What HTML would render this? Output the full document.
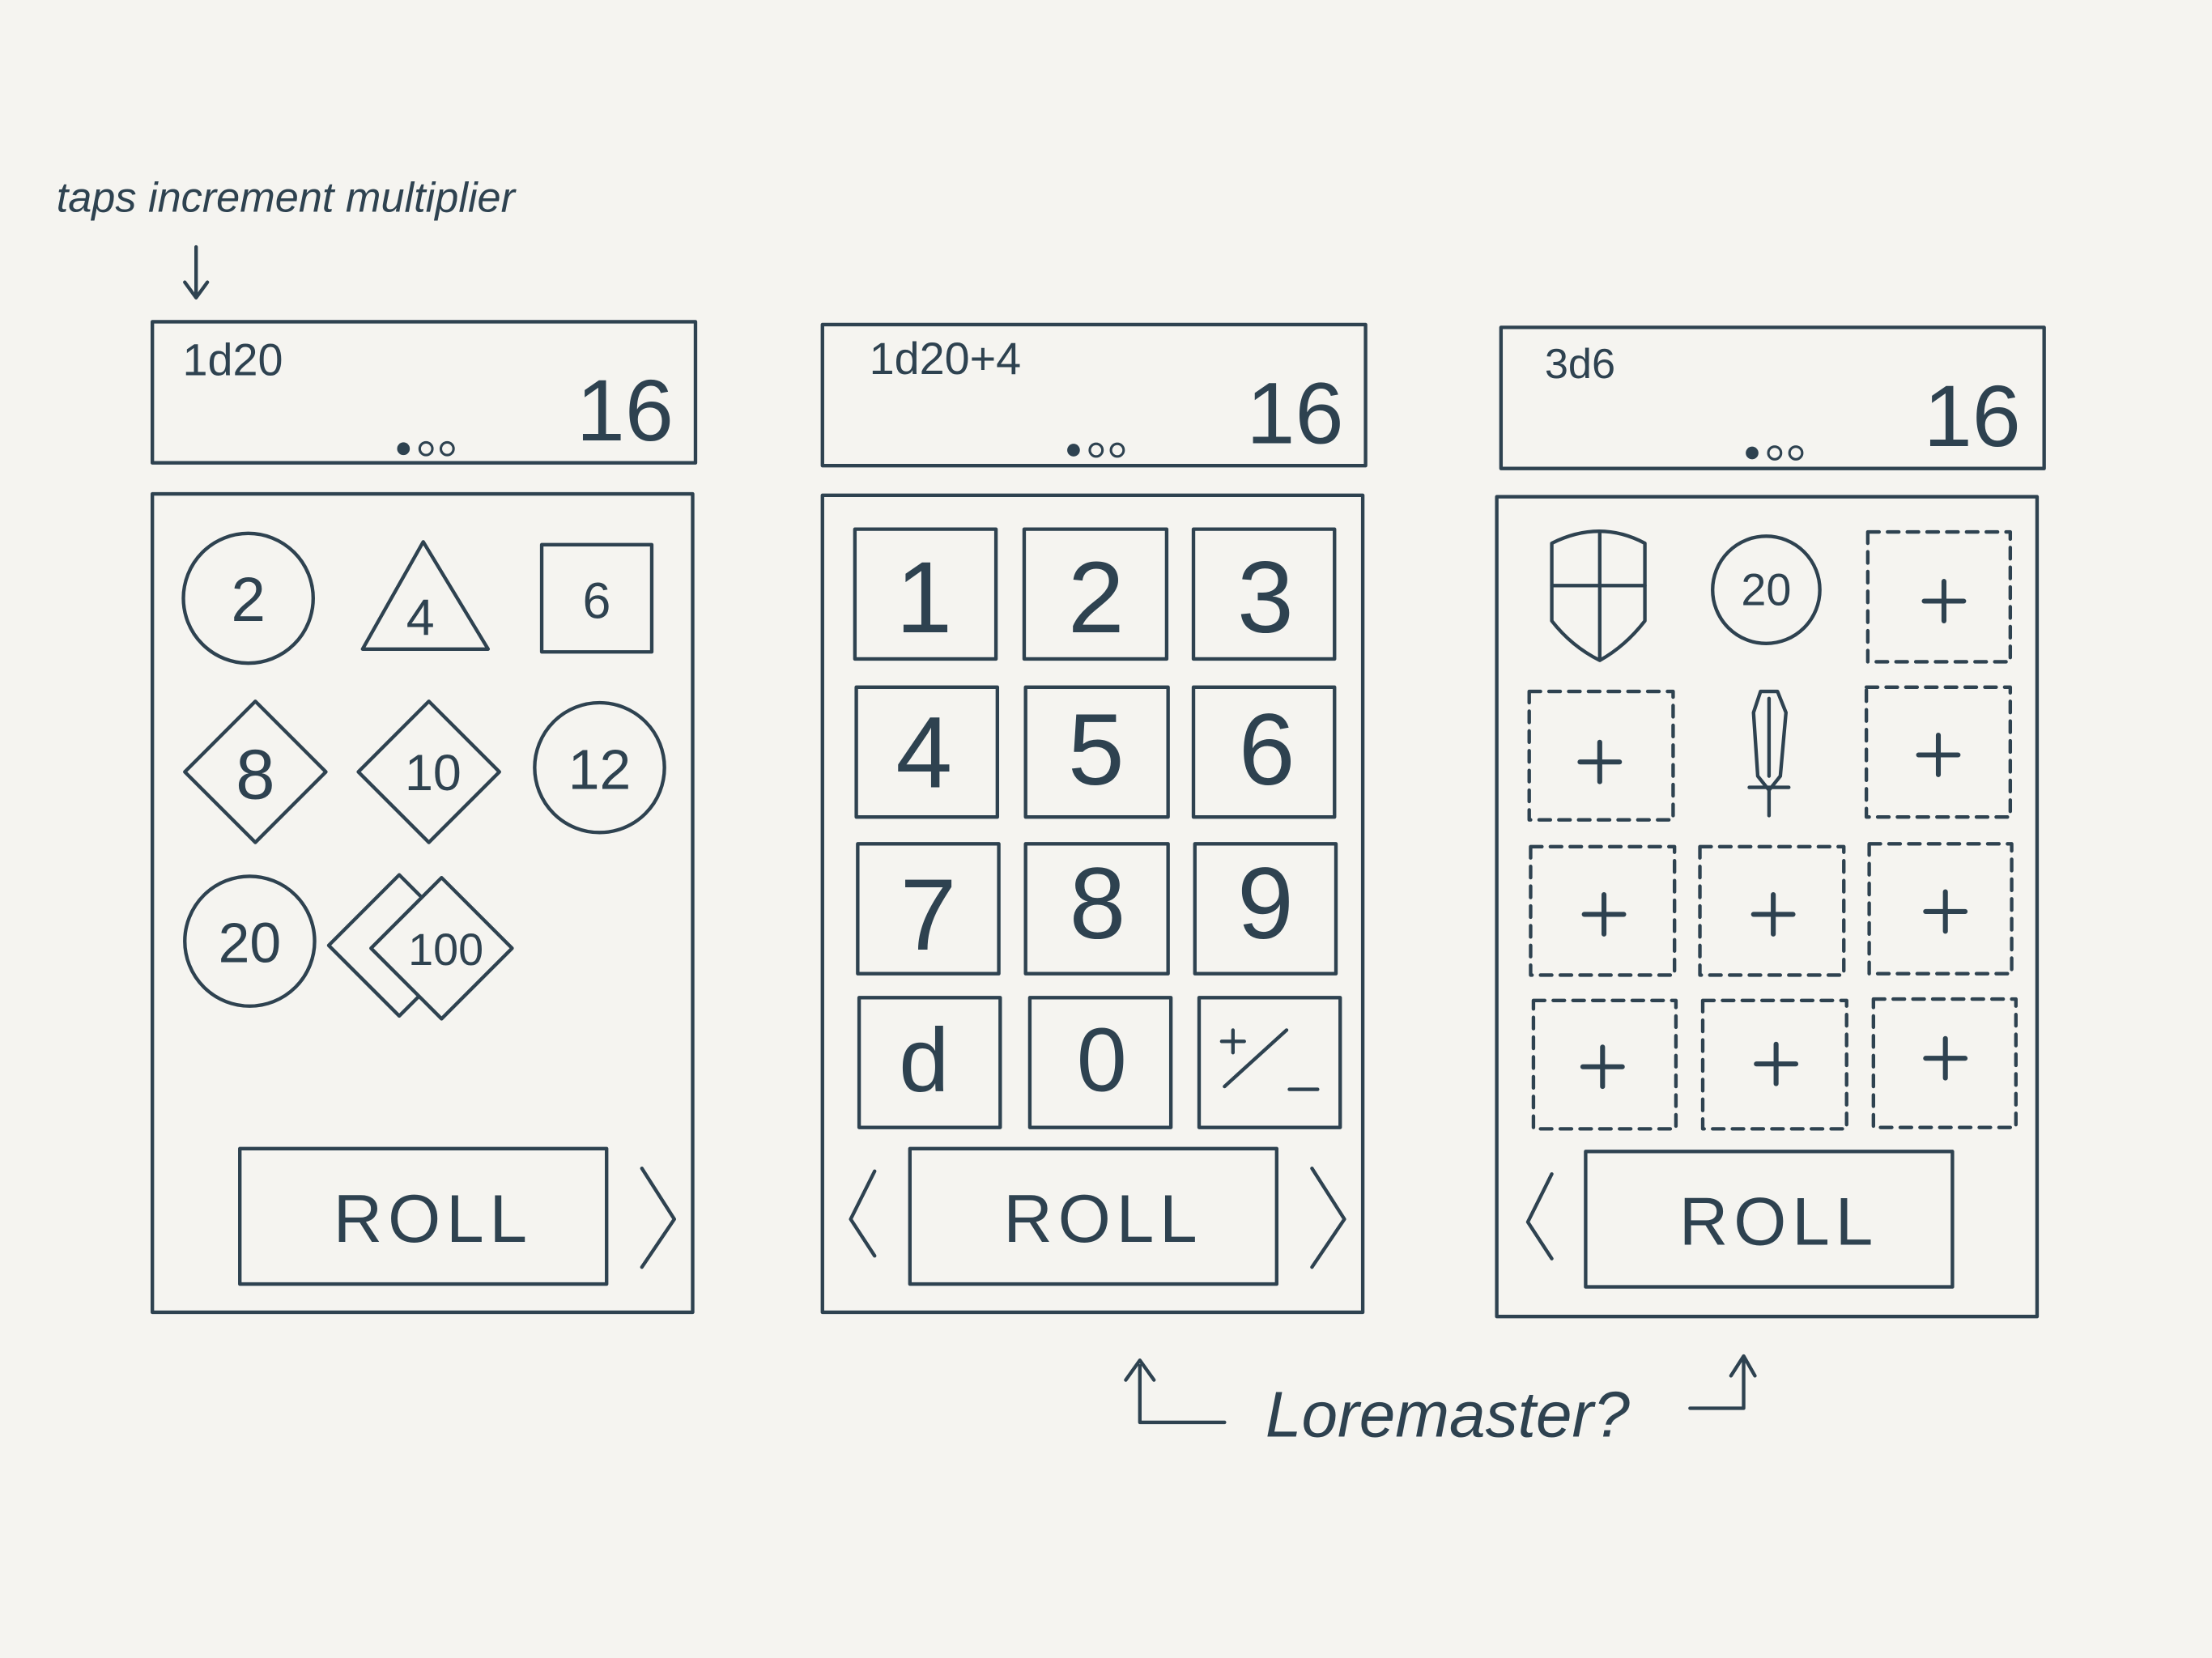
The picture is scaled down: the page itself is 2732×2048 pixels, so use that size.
<!DOCTYPE html>
<html><head><meta charset="utf-8"><style>
html,body{margin:0;padding:0;background:#f5f4f0;}
svg{display:block}
text{font-family:"Liberation Sans",sans-serif;fill:#2e4250;}
</style></head><body>
<svg width="2732" height="2048" viewBox="0 0 1568 1175" preserveAspectRatio="none" xmlns="http://www.w3.org/2000/svg">
<rect width="1568" height="1175" fill="#f5f4f0"/>
<g fill="none" stroke="#2e4250" stroke-width="2.5" stroke-linejoin="round" stroke-linecap="round">
<!-- panel 1 -->
<rect x="108" y="228" width="385" height="100"/>
<rect x="108" y="350" width="383" height="580"/>
<circle cx="176" cy="424" r="46"/>
<path d="M257,460 L300,384 L346,460 Z"/>
<rect x="384" y="386" width="78" height="76"/>
<path d="M181,497 L231,547 L181,597 L131,547 Z"/>
<path d="M304,497 L354,547 L304,597 L254,547 Z"/>
<circle cx="425" cy="544" r="46"/>
<circle cx="177" cy="667" r="46"/>
<path d="M283,620 L333,670 L283,720 L233,670 Z"/>
<path d="M313,622 L363,672 L313,722 L263,672 Z" fill="#f5f4f0"/>
<rect x="170" y="814" width="260" height="96"/>
<path d="M455,828 L478,864 L455,898"/>
<!-- panel 2 -->
<rect x="583" y="230" width="385" height="100"/>
<rect x="583" y="351" width="383" height="579"/>
<rect x="606" y="375" width="100" height="92"/>
<rect x="726" y="375" width="101" height="92"/>
<rect x="846" y="375" width="100" height="92"/>
<rect x="607" y="487" width="100" height="92"/>
<rect x="727" y="487" width="101" height="92"/>
<rect x="846" y="487" width="100" height="92"/>
<rect x="608" y="598" width="100" height="92"/>
<rect x="727" y="598" width="101" height="92"/>
<rect x="847" y="598" width="100" height="92"/>
<rect x="609" y="707" width="100" height="92"/>
<rect x="730" y="707" width="100" height="92"/>
<rect x="850" y="707" width="100" height="92"/>
<rect x="645" y="814" width="260" height="96"/>
<path d="M620,830 L603,864 L620,890"/>
<path d="M930,828 L953,864 L930,898"/>
<path d="M868,770 L912,730 M866,738 L882,738 M874,730 L874,746 M914,772 L934,772"/>
<!-- panel 3 -->
<rect x="1064" y="232" width="385" height="100"/>
<rect x="1061" y="352" width="383" height="581"/>
<path d="M1100,385 Q1134,368 1166,385 L1166,440 Q1152,458 1134,468 Q1114,458 1100,440 Z"/>
<path d="M1134,378 L1134,466 M1100,415 L1166,415"/>
<circle cx="1252" cy="418" r="38"/>
<path d="M1248,490 L1243,505 L1246,550 L1254,560 L1262,550 L1266,505 L1260,490 Z M1254,495 L1254,550 M1240,558 L1268,558 M1254,560 L1254,578"/>
<g stroke-dasharray="8,6">
<rect x="1324" y="377" width="101" height="92"/>
<rect x="1084" y="490" width="102" height="91"/>
<rect x="1323" y="487" width="102" height="92"/>
<rect x="1085" y="600" width="102" height="91"/>
<rect x="1205" y="600" width="102" height="91"/>
<rect x="1325" y="598" width="101" height="92"/>
<rect x="1087" y="709" width="101" height="91"/>
<rect x="1207" y="709" width="102" height="91"/>
<rect x="1328" y="708" width="101" height="91"/>
</g>
<g stroke-width="3.5">
<path d="M1364,426 L1392,426 M1378,412 L1378,440"/>
<path d="M1120,540 L1148,540 M1134,526 L1134,554"/>
<path d="M1360,535 L1388,535 M1374,521 L1374,549"/>
<path d="M1123,648 L1151,648 M1137,634 L1137,662"/>
<path d="M1243,648 L1271,648 M1257,634 L1257,662"/>
<path d="M1365,646 L1393,646 M1379,632 L1379,660"/>
<path d="M1122,756 L1150,756 M1136,742 L1136,770"/>
<path d="M1245,754 L1273,754 M1259,740 L1259,768"/>
<path d="M1365,750 L1393,750 M1379,736 L1379,764"/>
</g>
<rect x="1124" y="816" width="260" height="96"/>
<path d="M1100,832 L1083,866 L1100,892"/>
<!-- annotations -->
<path d="M139,175 L139,210 M131,200 L139,211 L147,200"/>
<path d="M808,968 L808,1008 L868,1008 M798,978 L808,964 L818,978"/>
<path d="M1198,998 L1236,998 L1236,963 M1227,975 L1236,961 L1244,975"/>
</g>
<g fill="#2e4250">
<circle cx="286" cy="318" r="4.5"/><circle cx="302" cy="318" r="4.5" fill="none" stroke="#2e4250" stroke-width="1.8"/><circle cx="317" cy="318" r="4.5" fill="none" stroke="#2e4250" stroke-width="1.8"/>
<circle cx="761" cy="319" r="4.5"/><circle cx="777" cy="319" r="4.5" fill="none" stroke="#2e4250" stroke-width="1.8"/><circle cx="792" cy="319" r="4.5" fill="none" stroke="#2e4250" stroke-width="1.8"/>
<circle cx="1242" cy="321" r="4.5"/><circle cx="1258" cy="321" r="4.5" fill="none" stroke="#2e4250" stroke-width="1.8"/><circle cx="1273" cy="321" r="4.5" fill="none" stroke="#2e4250" stroke-width="1.8"/>
</g>
<g text-anchor="middle">
<text x="165" y="266" font-size="32">1d20</text>
<text x="443" y="312" font-size="62">16</text>
<text x="176" y="440" font-size="44">2</text>
<text x="298" y="450" font-size="36">4</text>
<text x="423" y="438" font-size="36">6</text>
<text x="181" y="566" font-size="50">8</text>
<text x="307" y="560" font-size="36">10</text>
<text x="425" y="559" font-size="40">12</text>
<text x="177" y="682" font-size="40">20</text>
<text x="316" y="684" font-size="32">100</text>
<text x="307" y="880" font-size="48" letter-spacing="4">ROLL</text>

<text x="670" y="265" font-size="32">1d20+4</text>
<text x="918" y="314" font-size="62">16</text>
<text x="655" y="448" font-size="72">1</text>
<text x="777" y="448" font-size="72">2</text>
<text x="897" y="448" font-size="72">3</text>
<text x="655" y="558" font-size="72">4</text>
<text x="777" y="556" font-size="72">5</text>
<text x="898" y="556" font-size="72">6</text>
<text x="658" y="673" font-size="72">7</text>
<text x="778" y="665" font-size="72">8</text>
<text x="897" y="665" font-size="72">9</text>
<text x="655" y="773" font-size="64">d</text>
<text x="781" y="773" font-size="64">0</text>
<text x="782" y="880" font-size="48" letter-spacing="4">ROLL</text>

<text x="1120" y="268" font-size="30">3d6</text>
<text x="1398" y="316" font-size="62">16</text>
<text x="1252" y="429" font-size="32">20</text>
<text x="1261" y="882" font-size="48" letter-spacing="4">ROLL</text>
</g>
<text x="40" y="150" font-size="30" font-family="Liberation Sans" font-style="italic">taps increment multiplier</text>
<text x="897" y="1018" font-size="46" font-style="italic">Loremaster?</text>
</svg>
</body></html>
